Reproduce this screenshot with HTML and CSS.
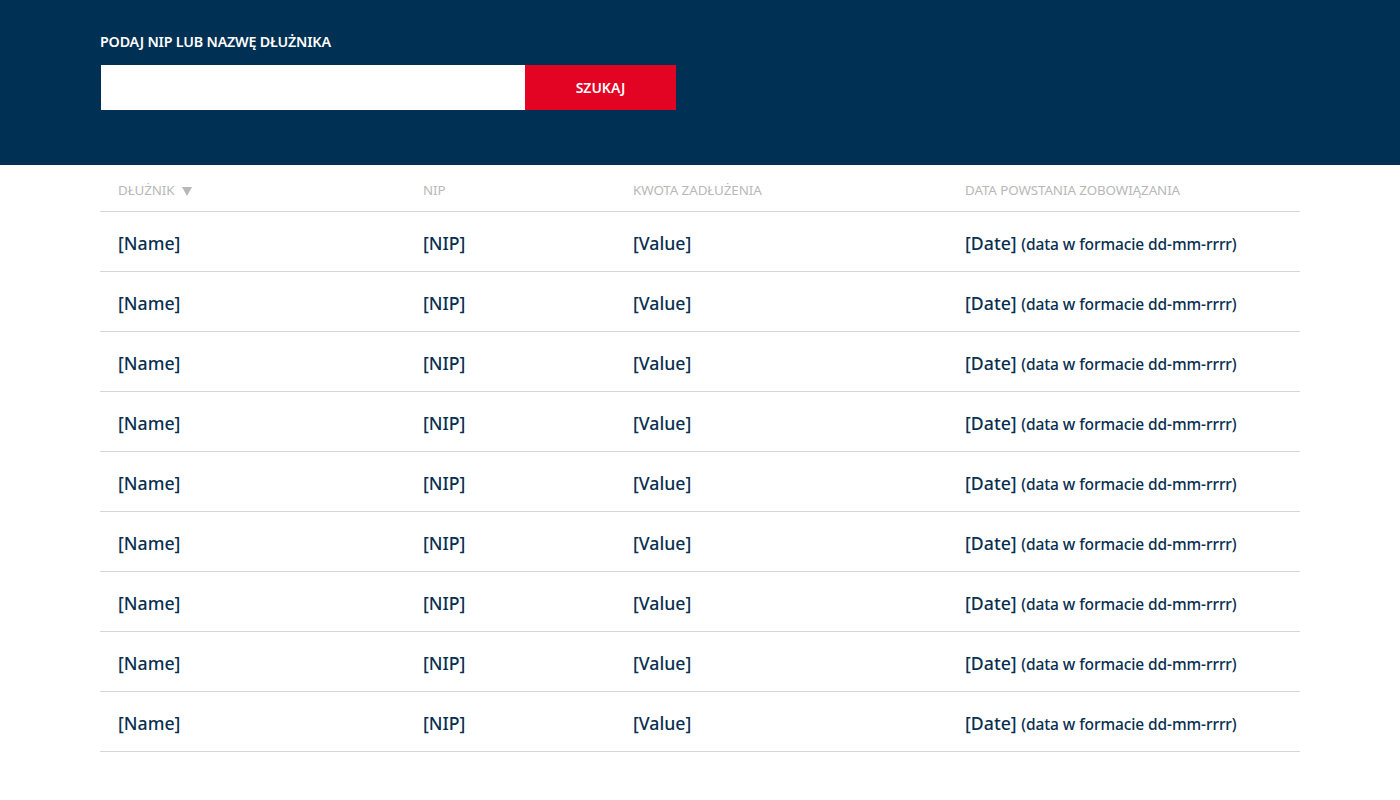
FILE: index.html
```html
<!DOCTYPE html>
<html lang="pl">
<head>
<meta charset="utf-8">
<title>Dłużnicy</title>
<link rel="stylesheet" href="styles.css">
</head>
<body>
<header class="hero">
  <div class="container">
    <label class="search-label" for="q">PODAJ NIP LUB NAZWĘ DŁUŻNIKA</label>
    <form class="search">
      <input id="q" class="search-input" type="text">
      <button class="search-btn" type="button">SZUKAJ</button>
    </form>
  </div>
</header>
<main class="container">
  <div class="table">
    <div class="row head">
      <div class="cell c1">DŁUŻNIK <span class="caret"></span></div>
      <div class="cell c2">NIP</div>
      <div class="cell c3">KWOTA ZADŁUŻENIA</div>
      <div class="cell c4">DATA POWSTANIA ZOBOWIĄZANIA</div>
    </div>
    <div class="row"><div class="cell c1">[Name]</div><div class="cell c2">[NIP]</div><div class="cell c3">[Value]</div><div class="cell c4">[Date] <small>(data w formacie dd-mm-rrrr)</small></div></div>
    <div class="row"><div class="cell c1">[Name]</div><div class="cell c2">[NIP]</div><div class="cell c3">[Value]</div><div class="cell c4">[Date] <small>(data w formacie dd-mm-rrrr)</small></div></div>
    <div class="row"><div class="cell c1">[Name]</div><div class="cell c2">[NIP]</div><div class="cell c3">[Value]</div><div class="cell c4">[Date] <small>(data w formacie dd-mm-rrrr)</small></div></div>
    <div class="row"><div class="cell c1">[Name]</div><div class="cell c2">[NIP]</div><div class="cell c3">[Value]</div><div class="cell c4">[Date] <small>(data w formacie dd-mm-rrrr)</small></div></div>
    <div class="row"><div class="cell c1">[Name]</div><div class="cell c2">[NIP]</div><div class="cell c3">[Value]</div><div class="cell c4">[Date] <small>(data w formacie dd-mm-rrrr)</small></div></div>
    <div class="row"><div class="cell c1">[Name]</div><div class="cell c2">[NIP]</div><div class="cell c3">[Value]</div><div class="cell c4">[Date] <small>(data w formacie dd-mm-rrrr)</small></div></div>
    <div class="row"><div class="cell c1">[Name]</div><div class="cell c2">[NIP]</div><div class="cell c3">[Value]</div><div class="cell c4">[Date] <small>(data w formacie dd-mm-rrrr)</small></div></div>
    <div class="row"><div class="cell c1">[Name]</div><div class="cell c2">[NIP]</div><div class="cell c3">[Value]</div><div class="cell c4">[Date] <small>(data w formacie dd-mm-rrrr)</small></div></div>
    <div class="row"><div class="cell c1">[Name]</div><div class="cell c2">[NIP]</div><div class="cell c3">[Value]</div><div class="cell c4">[Date] <small>(data w formacie dd-mm-rrrr)</small></div></div>
  </div>
</main>
</body>
</html>
```
FILE: styles.css
```css
* { box-sizing: border-box; }
html, body { margin: 0; padding: 0; background: #fff; }
body { font-family: "Noto Sans", "Open Sans", sans-serif; color: #0a2f50; }

.container { width: 1200px; margin: 0 auto; }

.hero { background: #003053; height: 165px; padding-top: 33px; }
.search-label {
  display: block;
  color: #fff;
  font-size: 14.3px;
  font-weight: 600;
  letter-spacing: -0.2px;
  line-height: 18px;
  margin-bottom: 14px;
}
.search { display: flex; margin: 0; }
.search-input {
  width: 424px;
  height: 45px;
  border: 0;
  margin: 0 0 0 1px;
  padding: 0 12px;
  background: #fff;
  font: inherit;
  outline: none;
}
.search-btn {
  width: 151px;
  height: 45px;
  border: 0;
  background: #e30322;
  color: #fff;
  font-family: inherit;
  font-size: 14px;
  font-weight: 600;
  letter-spacing: 0;
  cursor: pointer;
}

.table { display: flex; flex-direction: column; }
.row {
  display: flex;
  align-items: center;
  height: 60px;
  border-bottom: 1px solid #d6d6d6;
  font-size: 17.7px;
  font-weight: 500;
  color: #0a2f50;
  padding-top: 2px;
}
.row.head {
  height: 47px;
  font-size: 13.4px;
  font-weight: 400;
  color: #b8b8b8;
  letter-spacing: -0.1px;
  padding-top: 3px;
}
.cell { padding-left: 18px; white-space: nowrap; }
.c1 { width: 305px; }
.c2 { width: 210px; }
.c3 { width: 331px; }
.c4 { flex: 1; padding-left: 19px; }
.row small { font-size: 15.5px; font-weight: 500; letter-spacing: -0.1px; }
.caret {
  display: inline-block;
  width: 0; height: 0;
  border-left: 5px solid transparent;
  border-right: 5px solid transparent;
  border-top: 9px solid #b8b8b8;
  margin-left: 4px;
  vertical-align: -1px;
}
```
